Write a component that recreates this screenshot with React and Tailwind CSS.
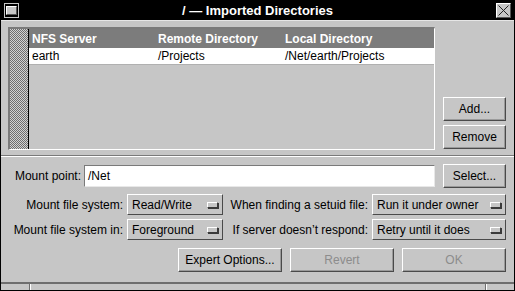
import React from 'react'

const raised = 'border border-t-white border-l-white border-r-[#4a4a4a] border-b-[#4a4a4a] bg-[#c6c6c6]'

function Button({ children, disabled, className = '' }) {
  return (
    <div
      className={`${raised} h-[24px] flex items-center justify-center text-[12px] shadow-[inset_-1px_-1px_0_#9a9a9a] ${
        disabled ? 'text-[#8c8c8c]' : 'text-black'
      } ${className}`}
    >
      {children}
    </div>
  )
}

function OptionMenu({ value, className = '' }) {
  return (
    <div className={`${raised} h-[21px] flex items-center justify-between pl-[4px] pr-[4px] text-[12px] ${className}`}>
      <span>{value}</span>
      <span className="w-[11px] h-[6px] border border-t-white border-l-white border-r-[#3a3a3a] border-b-[#3a3a3a] bg-[#c6c6c6] shadow-[1px_1px_0_#3a3a3a]" />
    </div>
  )
}

export default function App() {
  return (
    <div className="w-[515px] h-[291px] flex flex-col bg-[#c6c6c6] border-x border-b border-black font-['Liberation_Sans',Arial,sans-serif] text-[12px] text-black overflow-hidden">
      {/* Title bar */}
      <div className="h-[21px] -mx-px bg-black flex items-center px-[4px] border-b border-[#e6e6e6] shrink-0">
        <div className="w-[15px] h-[15px] border border-[#c6c6c6] flex items-center justify-center">
          <div className="w-[11px] h-[9px] bg-[#c6c6c6] border border-t-white border-l-white border-r-[#555] border-b-[#555]" />
        </div>
        <div className="flex-1 text-center text-white font-bold text-[13px] leading-none">/ — Imported Directories</div>
        <div className="w-[15px] h-[15px] bg-[#c6c6c6] border border-t-white border-l-white border-r-[#555] border-b-[#555] flex items-center justify-center">
          <svg width="11" height="11" viewBox="0 0 11 11">
            <path d="M0.5 0.5 L10.5 10.5 M10.5 0.5 L0.5 10.5" stroke="#222" strokeWidth="1" />
          </svg>
        </div>
      </div>

      {/* Directory list + buttons */}
      <div className="flex pl-[7px] pr-[8px] pt-[6px] gap-[8px]">
        <div className="w-[427px] h-[123px] flex border-t-2 border-l-2 border-t-[#7a7a7a] border-l-[#7a7a7a] border-r border-b border-r-white border-b-white">
          <div className="w-[19px] border-r border-black bg-[image:repeating-conic-gradient(#6e6e6e_0%_25%,#d2d2d2_0%_50%)] bg-[length:2px_2px]" />
          <div className="flex-1 flex flex-col">
            <div className="h-[19px] bg-[#7c7c7c] text-white font-bold flex items-center pl-[3px]">
              <span className="w-[126px]">NFS Server</span>
              <span className="w-[127px]">Remote Directory</span>
              <span>Local Directory</span>
            </div>
            <div className="h-[17px] bg-white flex items-center pl-[3px] border-b border-[#b0b0b0]">
              <span className="w-[126px]">earth</span>
              <span className="w-[127px]">/Projects</span>
              <span>/Net/earth/Projects</span>
            </div>
          </div>
        </div>
        <div className="w-[63px] flex flex-col justify-end gap-[4px] pb-[1px]">
          <Button>Add...</Button>
          <Button>Remove</Button>
        </div>
      </div>

      {/* Separator */}
      <div className="mt-[5px] h-[2px] border-t border-[#7a7a7a] border-b border-b-white" />

      {/* Mount point */}
      <div className="mt-[7px] h-[24px] flex items-center justify-end pr-[8px]">
        <span className="mr-[3px]">Mount point:</span>
        <div className="w-[351px] h-[22px] bg-white border border-t-[#7a7a7a] border-l-[#7a7a7a] border-r-[#e8e8e8] border-b-[#e8e8e8] flex items-center pl-[3px]">
          /Net
        </div>
        <Button className="w-[63px] ml-[8px]">Select...</Button>
      </div>

      {/* Options */}
      <div className="mt-[6px] flex items-center pl-[8px]">
        <span className="w-[114px] text-right">Mount file system:</span>
        <OptionMenu value="Read/Write" className="w-[96px] ml-[4px]" />
        <span className="w-[145px] text-right">When finding a setuid file:</span>
        <OptionMenu value="Run it under owner" className="w-[134px] ml-[4px]" />
      </div>
      <div className="mt-[4px] flex items-center pl-[8px]">
        <span className="w-[114px] text-right">Mount file system in:</span>
        <OptionMenu value="Foreground" className="w-[96px] ml-[4px]" />
        <span className="w-[145px] text-right">If server doesn’t respond:</span>
        <OptionMenu value="Retry until it does" className="w-[134px] ml-[4px]" />
      </div>

      {/* Action buttons */}
      <div className="mt-[8px] flex justify-end gap-[8px] pr-[8px]">
        <Button className="w-[104px]">Expert Options...</Button>
        <Button className="w-[104px]" disabled>Revert</Button>
        <Button className="w-[104px]" disabled>OK</Button>
      </div>

      <div className="flex-1" />

      {/* Status strip */}
      <div className="h-[8px] flex border-t-2 border-[#6e6e6e] shrink-0">
        <div className="w-[29px] border-r border-r-[#6e6e6e]" />
        <div className="flex-1 border-l border-l-white border-r border-r-[#6e6e6e]" />
        <div className="w-[28px] border-l border-l-white" />
      </div>
    </div>
  )
}
